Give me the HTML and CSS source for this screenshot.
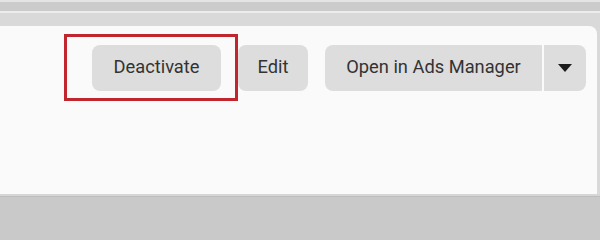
FILE: index.html
```html
<!DOCTYPE html>
<html lang="en">
<head>
<meta charset="utf-8">
<title>Ad actions</title>
<link rel="stylesheet" href="styles.css">
</head>
<body>
<div class="top-strip"></div>
<main class="panel">
  <div class="toolbar">
    <div class="highlight-wrap">
      <button class="btn btn-deactivate">Deactivate</button>
      <span class="highlight"></span>
    </div>
    <button class="btn btn-edit">Edit</button>
    <div class="split">
      <button class="btn btn-open">Open in Ads Manager</button>
      <button class="btn btn-caret" aria-label="More options">
        <svg width="14" height="8" viewBox="0 0 14 8"><polygon points="0,0 14,0 7,8" fill="#1c1c1c"/></svg>
      </button>
    </div>
  </div>
</main>
<div class="bottom-strip"></div>
</body>
</html>
```
FILE: styles.css
```css
html, body {
  margin: 0;
  padding: 0;
}
html {
  height: 204px;
  overflow: hidden;
  background: #c9c9c9;
}
body {
  width: 600px;
  height: 204px;
  overflow: hidden;
  background: #d9d9d9;
  font-family: Roboto, "Liberation Sans", Arial, sans-serif;
}
.top-strip {
  height: 26px;
  background: linear-gradient(to bottom,
    #e4e4e4 0, #e4e4e4 2px,
    #cbcbcb 2px, #cbcbcb 11px,
    #ececec 11px, #ececec 13px,
    #d9d9d9 13px, #d9d9d9 26px);
}
.panel {
  width: 597px;
  height: 168px;
  background: #fafafa;
  border-top-right-radius: 8px;
  box-sizing: border-box;
}
.toolbar {
  display: flex;
  align-items: center;
  padding: 19px 0 0 92px;
}
.btn {
  height: 46px;
  border: none;
  border-radius: 8px;
  background: #dddddd;
  color: #333333;
  font-family: inherit;
  font-size: 18.3px;
  padding: 0 0 3px;
  box-sizing: border-box;
  display: flex;
  align-items: center;
  justify-content: center;
}
.highlight-wrap {
  position: relative;
}
.btn-deactivate {
  width: 129px;
}
.highlight {
  position: absolute;
  left: -28px;
  right: -17px;
  top: -11px;
  bottom: -10px;
  border: 3px solid #c1262e;
  pointer-events: none;
}
.btn-edit {
  width: 70px;
  margin-left: 17px;
}
.split {
  display: flex;
  margin-left: 17px;
  gap: 2px;
}
.btn-open {
  width: 217px;
  border-radius: 8px 0 0 8px;
}
.btn-caret {
  width: 42px;
  border-radius: 0 8px 8px 0;
  padding: 0;
}
.bottom-strip {
  height: 10px;
  background: linear-gradient(to bottom,
    #d6d6d6 0, #d6d6d6 2px,
    #bdbdbd 2px, #bdbdbd 3px,
    #c9c9c9 3px, #c9c9c9 10px);
}
```
